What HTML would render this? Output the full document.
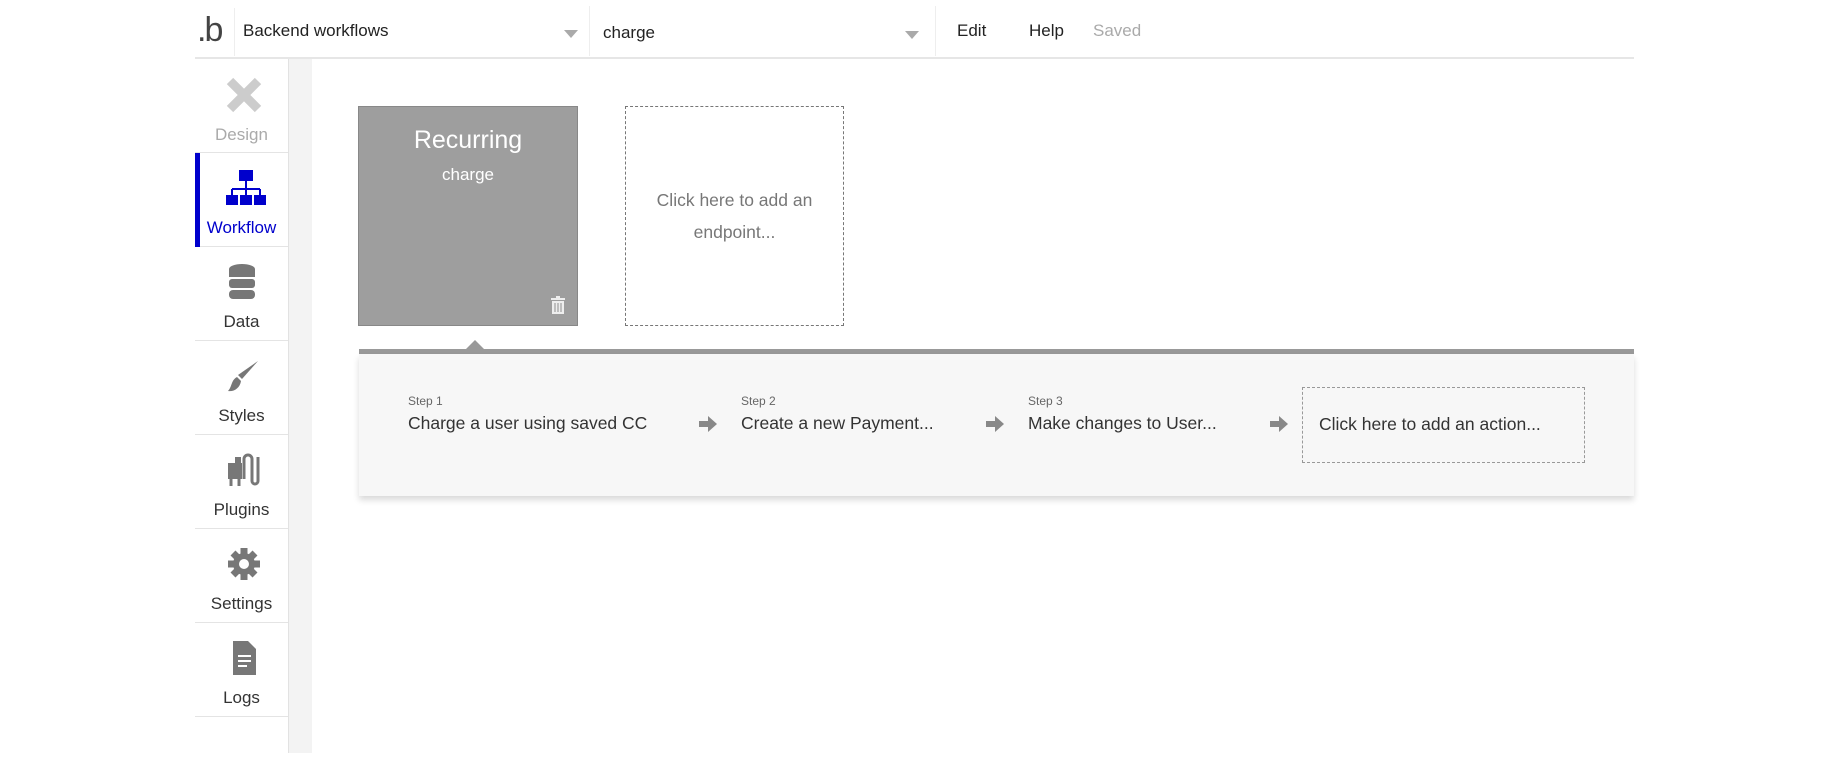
<!DOCTYPE html>
<html><head><meta charset="utf-8"><style>
*{margin:0;padding:0;box-sizing:border-box}
body{width:1830px;height:758px;background:#fff;position:relative;overflow:hidden;font-family:"Liberation Sans",sans-serif;color:#222}
.a{position:absolute}
.side .it{position:absolute;left:195px;width:93px;height:94px;border-bottom:1px solid #e4e4e4;text-align:center}
.side .lbl{position:absolute;left:0;right:0;top:65px;font-size:17px;color:#333}
.side svg{position:absolute;left:31px;top:16px}
.step .l{font-size:12px;color:#666}
.step .t{font-size:17.5px;color:#333;margin-top:5px;white-space:nowrap}
.arr{position:absolute;top:413px}
</style></head><body>
<!-- top bar -->
<div class="a" style="left:195px;top:57px;width:1439px;height:2px;background:#e6e6e6"></div>
<div class="a" style="left:197px;top:10px;font-size:34px;color:#444;line-height:40px;letter-spacing:-2px">.b</div>
<div class="a" style="left:234px;top:8px;width:1px;height:48px;background:#eee"></div>
<div class="a" style="left:243px;top:21px;font-size:17px">Backend workflows</div>
<div class="a" style="left:564px;top:30px;width:0;height:0;border-left:7px solid transparent;border-right:7px solid transparent;border-top:8px solid #aaa"></div>
<div class="a" style="left:589px;top:6px;width:1px;height:50px;background:#eee"></div>
<div class="a" style="left:603px;top:23px;font-size:17px">charge</div>
<div class="a" style="left:905px;top:31px;width:0;height:0;border-left:7px solid transparent;border-right:7px solid transparent;border-top:8px solid #aaa"></div>
<div class="a" style="left:935px;top:6px;width:1px;height:50px;background:#eee"></div>
<div class="a" style="left:957px;top:21px;font-size:17px">Edit</div>
<div class="a" style="left:1029px;top:21px;font-size:17px">Help</div>
<div class="a" style="left:1093px;top:21px;font-size:17px;color:#aaa">Saved</div>
<!-- gray column -->
<div class="a" style="left:288px;top:59px;width:24px;height:694px;background:#f3f3f3;border-left:1px solid #e2e2e2"></div>
<!-- sidebar -->
<div class="side">
<div class="it" style="top:59px"><svg width="36" height="40" viewBox="0 0 36 40"><path d="M4 6 L32 34 M32 6 L4 34" stroke="#ccc" stroke-width="9"/></svg><div class="lbl" style="color:#aaa;top:66px">Design</div></div>
<div class="it" style="top:153px"><svg width="40" height="38" viewBox="0 0 40 38"><rect x="13" y="1" width="14" height="11" fill="#0000cc"/><path d="M20 12v8M6 20h28M6 20v6M20 20v6M34 20v6" stroke="#0000cc" stroke-width="2" fill="none"/><rect x="0" y="26" width="12" height="10" fill="#0000cc"/><rect x="14" y="26" width="12" height="10" fill="#0000cc"/><rect x="28" y="26" width="12" height="10" fill="#0000cc"/></svg><div class="lbl" style="color:#0000cc">Workflow</div></div>
<div class="a" style="left:195px;top:153px;width:5px;height:94px;background:#0000cc"></div>
<div class="it" style="top:247px"><svg width="32" height="38" viewBox="0 0 32 38"><ellipse cx="16" cy="6" rx="13" ry="5" fill="#777"/><rect x="3" y="6" width="26" height="8" fill="#777"/><rect x="3" y="16" width="26" height="9" rx="3" fill="#777"/><rect x="3" y="27" width="26" height="9" rx="4" fill="#777"/></svg><div class="lbl">Data</div></div>
<div class="it" style="top:341px"><svg width="36" height="38" viewBox="0 0 36 38"><path d="M32 4 L16 22 L12 18 Z" fill="#777"/><path d="M11 20 L15 24 C14 31 8 35 2 34 C6 30 5 23 11 20 Z" fill="#777"/></svg><div class="lbl">Styles</div></div>
<div class="it" style="top:435px"><svg width="36" height="38" viewBox="0 0 36 38"><rect x="2" y="12" width="14" height="16" fill="#777"/><rect x="9" y="6" width="6" height="6" fill="#777"/><path d="M5 28v7M13 28v7" stroke="#777" stroke-width="3"/><path d="M18 28V8a4 4 0 0 1 8 0v22a3 3 0 0 0 6 0V6" stroke="#777" stroke-width="3" fill="none"/></svg><div class="lbl">Plugins</div></div>
<div class="it" style="top:529px"><svg width="36" height="38" viewBox="0 0 36 38"><circle cx="18" cy="19" r="11" fill="#777"/><path d="M18 3v32M2 19h32M7 8l22 22M29 8L7 30" stroke="#777" stroke-width="7"/><circle cx="18" cy="19" r="5" fill="#fff"/></svg><div class="lbl">Settings</div></div>
<div class="it" style="top:623px"><svg width="36" height="38" viewBox="0 0 36 38"><path d="M7 2h15l8 8v26H7z" fill="#777"/><path d="M12 17h13M12 22h13M12 27h9" stroke="#fff" stroke-width="2"/></svg><div class="lbl">Logs</div></div>
</div>
<!-- cards -->
<div class="a" style="left:358px;top:106px;width:220px;height:220px;background:#9e9e9e;border:1px solid #888;text-align:center;color:#fff">
<div style="font-size:25px;margin-top:19px">Recurring</div>
<div style="font-size:17px;margin-top:10px">charge</div>
<svg class="a" style="left:191px;top:188px" width="16" height="20" viewBox="0 0 16 20"><rect x="1" y="3" width="14" height="2" fill="#eee"/><rect x="6" y="1" width="4" height="2" fill="#eee"/><path d="M2 6h12v13H2z" fill="#eee"/><path d="M5 8v9M8 8v9M11 8v9" stroke="#9e9e9e" stroke-width="1.2"/></svg>
</div>
<div class="a" style="left:625px;top:106px;width:219px;height:220px;border:1px dashed #777;text-align:center;font-size:17.5px;color:#777;line-height:32px;padding-top:77px">Click here to add an<br>endpoint...</div>
<!-- step panel -->
<div class="a" style="left:466px;top:340px;width:0;height:0;border-left:9px solid transparent;border-right:9px solid transparent;border-bottom:9px solid #999"></div>
<div class="a" style="left:359px;top:349px;width:1275px;height:5px;background:#999"></div>
<div class="a" style="left:359px;top:354px;width:1275px;height:142px;background:#f7f7f7;box-shadow:0 4px 6px rgba(0,0,0,.15)"></div>
<div class="a step" style="left:408px;top:394px"><div class="l">Step 1</div><div class="t">Charge a user using saved CC</div></div>
<div class="a step" style="left:741px;top:394px"><div class="l">Step 2</div><div class="t">Create a new Payment...</div></div>
<div class="a step" style="left:1028px;top:394px"><div class="l">Step 3</div><div class="t">Make changes to User...</div></div>
<svg class="arr" style="left:697px" width="22" height="22" viewBox="0 0 22 22"><path d="M2 8h9V3l9 8-9 8v-5H2z" fill="#888"/></svg>
<svg class="arr" style="left:984px" width="22" height="22" viewBox="0 0 22 22"><path d="M2 8h9V3l9 8-9 8v-5H2z" fill="#888"/></svg>
<svg class="arr" style="left:1268px" width="22" height="22" viewBox="0 0 22 22"><path d="M2 8h9V3l9 8-9 8v-5H2z" fill="#888"/></svg>
<div class="a" style="left:1302px;top:387px;width:283px;height:76px;border:1px dashed #999;font-size:17.5px;color:#333;padding:26px 0 0 16px;white-space:nowrap">Click here to add an action...</div>
</body></html>
